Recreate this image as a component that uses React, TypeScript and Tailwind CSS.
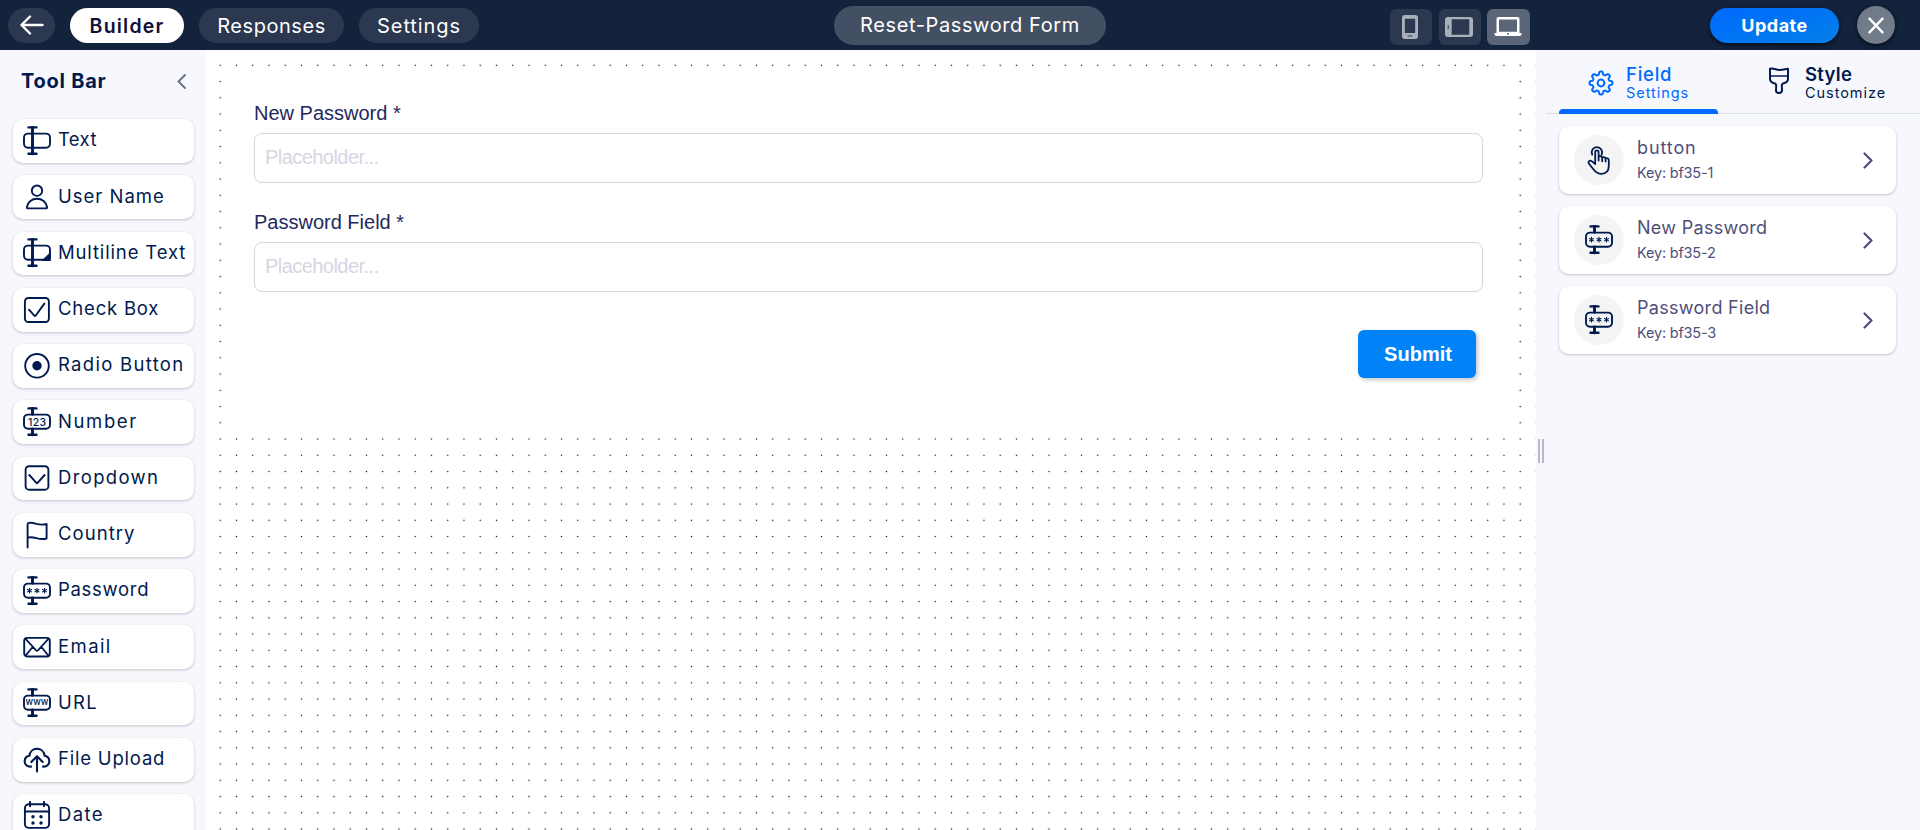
import React from "react";

const NAVY = "#001a4d";

function Beam({ children, solid }: { children?: React.ReactNode; solid?: boolean }) {
  return (
    <>
      <rect x="2" y="7.6" width="26" height="14.2" rx="4" />
      <path d="M6.5 1.4h8M6.5 27.7h8" strokeWidth="2.4" />
      {solid ? <path d="M10.5 1.2v26.7" strokeWidth="2.9" /> : <path d="M10.5 1.2v6M10.5 22v5.9" strokeWidth="2.9" />}
      {children}
    </>
  );
}

const icons: Record<string, React.ReactNode> = {
  Text: <Beam solid />,
  "User Name": (
    <>
      <circle cx="15" cy="8.7" r="5.2" />
      <path d="M6 26.4h18c.8 0 1.200-.5 1.100-1.200C24.300 20 20 16.800 15 16.800S5.700 20 4.900 25.200c-.1.7.3 1.200 1.100 1.200z" />
    </>
  ),
  "Multiline Text": (
    <Beam solid>
      <path d="M28.300 15v7.500H20.500z" fill={NAVY} strokeWidth="1" />
    </Beam>
  ),
  "Check Box": (
    <>
      <rect x="2.9" y="3" width="24" height="24" rx="3.5" />
      <path d="M7 14.700l5.300 6c.4.5.9.5 1.300 0L22.300 8.600" />
    </>
  ),
  "Radio Button": (
    <>
      <circle cx="15" cy="14.8" r="11.8" />
      <circle cx="15" cy="14.8" r="4.7" fill={NAVY} stroke="none" />
    </>
  ),
  Number: (
    <Beam>
      <text x="15.2" y="18.5" textAnchor="middle" fontSize="10.5" fontWeight="500" letterSpacing="0.4" stroke="none" fill={NAVY}>123</text>
    </Beam>
  ),
  Dropdown: (
    <>
      <rect x="3.6" y="3.2" width="22.8" height="23.5" rx="3.5" />
      <path d="M7.300 12l7.100 7.900c.4.4.8.4 1.200 0l7-7.900" />
    </>
  ),
  Country: <path d="M5.600 27.500V4.400c0-.8.4-1.300 1.200-1.500C12.500 1.500 15.500 6.500 24.600 4v14.500c-8.500 2.500-11.600-3-19-.8" />,
  Password: (
    <Beam>
      <path
        strokeWidth="1.1"
        d="M7.500 12.400v4.600M5.500 13.500l4 2.400M9.500 13.500l-4 2.400M15 12.400v4.600M13 13.500l4 2.400M17 13.500l-4 2.400M22.500 12.400v4.600M20.500 13.500l4 2.400M24.500 13.500l-4 2.400"
      />
    </Beam>
  ),
  Email: (
    <>
      <rect x="2.2" y="5.9" width="25.6" height="18.6" rx="3" />
      <path d="M3.600 6.900l10.500 11.500c.6.6 1.200.6 1.800 0L26.400 6.900M3.600 23.600l7.200-8.800M26.400 23.600l-7.200-8.800" strokeWidth="1.7" />
    </>
  ),
  URL: (
    <Beam>
      <text x="15" y="17.4" textAnchor="middle" fontSize="9.2" fontWeight="500" stroke="none" fill={NAVY}>www</text>
    </Beam>
  ),
  "File Upload": (
    <path d="M9 21.600C5 21.900 2.600 19.400 2.700 16.200c0-3 2.100-5 4.700-5.400C7.900 6.500 11 3.800 15 3.800s7.100 2.700 7.600 7c2.600.4 4.700 2.400 4.700 5.400 0 3.200-2.300 5.700-6.200 5.400M15 26.400V11.500M9.300 17l5.700-5.800 5.700 5.800" strokeWidth="2.1" />
  ),
  Date: (
    <>
      <rect x="2.9" y="3.2" width="24.2" height="23.7" rx="4" />
      <path d="M3 10.500h24M8 .8v4.400M22 .8v4.400" />
      <path d="M11 15.600v.1M19 15.600v.1M11 21.900v.1M19 21.900v.1" strokeWidth="3.4" />
    </>
  ),
  Button: (
    <path
      strokeWidth="1.8"
      d="M11.200 19V7a1.700 1.700 0 0 1 3.400 0v8.500M14.600 11.500c2-.8 3.600 0 3.600 1.800v3M18.200 12.300c1.800-.6 3.400.2 3.400 1.800v2.500M21.600 13.300c1.800-.4 3.200.4 3.200 2v5.500c0 5-2.500 8-7.500 8-3.500 0-5.500-1.500-7.300-3.800l-5-6.300c-1.500-2 .8-4 2.700-2.600L11.200 19M8.200 9.600a5.200 5.200 0 1 1 9.400 0"
    />
  ),
};

function FieldIcon({ name }: { name: string }) {
  return (
    <svg width="30" height="30" viewBox="0 0 30 30" fill="none" stroke={NAVY} strokeWidth="1.9" strokeLinecap="round" strokeLinejoin="round" className="shrink-0">
      {icons[name]}
    </svg>
  );
}

const gearPath =
  Array.from({ length: 161 }, (_, i) => {
    const a = (i / 160) * Math.PI * 2;
    const r = 10 + 1.5 * Math.tanh(2.2 * Math.cos(8 * a));
    return `${i ? "L" : "M"}${(13 + r * Math.sin(a)).toFixed(2)} ${(13 - r * Math.cos(a)).toFixed(2)}`;
  }).join("") + "Z";

const tools = [
  { name: "Text", tracking: "tracking-[0.35px]" },
  { name: "User Name", tracking: "tracking-[1px]" },
  { name: "Multiline Text", tracking: "tracking-[0.85px]" },
  { name: "Check Box", tracking: "tracking-[0.8px]" },
  { name: "Radio Button", tracking: "tracking-[1.3px]" },
  { name: "Number", tracking: "tracking-[1.6px]" },
  { name: "Dropdown", tracking: "tracking-[1.35px]" },
  { name: "Country", tracking: "tracking-[1.05px]" },
  { name: "Password", tracking: "tracking-[0.7px]" },
  { name: "Email", tracking: "tracking-[1.4px]" },
  { name: "URL", tracking: "tracking-[1.3px]" },
  { name: "File Upload", tracking: "tracking-[0.8px]" },
  { name: "Date", tracking: "tracking-[1.4px]" },
];

const fields = [
  { title: "button", key: "Key: bf35-1", icon: "Button", tracking: "tracking-[0.9px]" },
  { title: "New Password", key: "Key: bf35-2", icon: "Password", tracking: "tracking-[0.3px]" },
  { title: "Password Field", key: "Key: bf35-3", icon: "Password", tracking: "tracking-[0.3px]" },
];

export default function App() {
  return (
    <div className="flex h-[830px] w-full flex-col overflow-hidden bg-white font-['Inter',sans-serif]">
      <header className="flex h-[50px] shrink-0 items-start bg-[#13233c] text-[20px] text-white">
        <div className="flex w-[834px] items-start gap-[15px] pl-2 pt-2">
          <button className="flex h-[35px] w-[47px] items-center justify-center rounded-full bg-[#2b384f]">
            <svg width="24" height="20" viewBox="0 0 24 20" fill="none" stroke="white" strokeWidth="2.4" strokeLinecap="round" strokeLinejoin="round" className="-mt-px"><path d="M22.500 10H1.500M10 1.500L1.500 10l8.500 8.500" /></svg>
          </button>
          <button className="h-[35px] w-[114px] rounded-full bg-white text-[19.5px] font-semibold leading-[34px] tracking-[1.2px] text-[#10103a]">Builder</button>
          <button className="h-[35px] w-[145px] rounded-full bg-[#2b384f] leading-[34px] tracking-[0.55px]">Responses</button>
          <button className="h-[35px] w-[120px] rounded-full bg-[#2b384f] leading-[34px] tracking-[0.9px]">Settings</button>
        </div>
        <div className="mt-1.5 h-[39px] w-[272px] rounded-full bg-[#434f62] text-center leading-[39px] tracking-[0.6px]">Reset-Password Form</div>
        <div className="flex flex-1 items-start justify-end pr-[25px]">
          <div className="mr-[180px] mt-[9px] flex gap-[7px]">
            <button className="flex h-[36px] w-[42px] items-center justify-center rounded-[6px] bg-[#2b384f] pr-[2px]">
              <svg width="16" height="24" viewBox="0 0 17 26" fill="#aab0b9" fillRule="evenodd" preserveAspectRatio="none"><path d="M3 0h11a3 3 0 0 1 3 3v20a3 3 0 0 1-3 3H3a3 3 0 0 1-3-3V3a3 3 0 0 1 3-3zM3 4v15.500h11V4zM6 22.200v1.200h5v-1.200z" /></svg>
            </button>
            <button className="flex h-[36px] w-[42px] items-center justify-center rounded-[6px] bg-[#2b384f] pr-[2px]">
              <svg width="28" height="20" viewBox="0 0 28 20" fill="#aab0b9" fillRule="evenodd"><path d="M3 0h22a3 3 0 0 1 3 3v14a3 3 0 0 1-3 3H3a3 3 0 0 1-3-3V3a3 3 0 0 1 3-3zM6.700 2.300v15.400h17.600V2.300zM2.700 8v4.200h1V8z" /></svg>
            </button>
            <button className="-ml-px flex h-[36px] w-[43px] items-center justify-center rounded-[6px] bg-[#5a6577] pr-px">
              <svg width="28" height="20" viewBox="0 0 28 20" fill="white" fillRule="evenodd" className="-mt-px"><path d="M4.500 0h19a2 2 0 0 1 2 2v14h2v1a2 2 0 0 1-2 2H2.500a2 2 0 0 1-2-2v-1h2V2a2 2 0 0 1 2-2zM5 2.500v12.300h18V2.500zM13 16v1.500h2V16z" /></svg>
            </button>
          </div>
          <button className="mr-[18px] mt-2 h-[35px] w-[129px] rounded-full bg-linear-to-br from-[#0069ff] to-[#087fe8] text-[18px] font-bold leading-[33px] tracking-[0.5px] shadow-[0_2px_4px_#060d1a]">Update</button>
          <button className="mt-[6px] flex h-[38px] w-[38px] items-center justify-center rounded-full bg-[#727b89] shadow-[0_2px_4px_#060d1a]">
            <svg width="16" height="17" viewBox="0 0 16 17" stroke="white" strokeWidth="2.4" strokeLinecap="round"><path d="M1.500 1.700l13 13.600M14.500 1.700l-13 13.600" /></svg>
          </button>
        </div>
      </header>

      <div className="flex min-h-0 flex-1">
        <aside className="w-[206px] shrink-0 bg-[#f6f8fd] pl-[13px] text-[#001a4d]">
          <div className="flex h-[69px] items-start justify-between pl-2 pr-5 pt-[19px]">
            <h2 className="text-[20px] font-bold leading-[24px] tracking-[0.75px]">Tool Bar</h2>
            <svg width="9" height="15" viewBox="0 0 9 15" fill="none" stroke="#6b7686" strokeWidth="2" strokeLinecap="round" strokeLinejoin="round" className="mt-[5px]"><path d="M8 1L1.500 7.500 8 14" /></svg>
          </div>
          <ul className="flex flex-col gap-[12.5px]">
            {tools.map((t) => (
              <li key={t.name} className="flex h-[43.75px] w-[181px] shrink-0 items-center gap-[6px] rounded-[10px] bg-white pl-[9px] shadow-[0_1px_3px_rgba(0,0,0,0.22)]">
                <FieldIcon name={t.name} />
                <span className={`whitespace-nowrap pb-[1.5px] text-[18.5px] ${t.tracking}`}>{t.name}</span>
              </li>
            ))}
          </ul>
        </aside>

        <main className="h-full w-[1330px] shrink-0 bg-[radial-gradient(#111_0.75px,transparent_1px)] bg-[length:16.25px_16.25px] bg-[position:6.1px_7.2px] pl-[17px] pt-[17px] font-['Liberation_Sans',sans-serif]">
          <div className="h-[367px] w-[1294px] bg-white pl-[31px] pt-[34px] text-[20px] text-[#24285c]">
            <label className="block h-[32px] leading-[24px]">New Password *</label>
            <div className="h-[50px] w-[1229px] rounded-[8px] border border-[#cfd9e0] pl-[10px] leading-[47px] tracking-[-0.55px] text-[#d6d6e2]">Placeholder...</div>
            <label className="mt-[27px] block h-[32px] leading-[24px]">Password Field *</label>
            <div className="h-[50px] w-[1229px] rounded-[8px] border border-[#cfd9e0] pl-[10px] leading-[47px] tracking-[-0.55px] text-[#d6d6e2]">Placeholder...</div>
            <button className="ml-[1104px] mt-[38px] block h-[48px] w-[118px] rounded-[6px] bg-[#0083f6] pl-[2px] font-bold leading-[47px] text-white shadow-[2px_2px_4px_rgba(0,0,0,0.22)]">Submit</button>
          </div>
        </main>

        <aside className="flex flex-1 bg-[#f6f8fd]">
          <div className="flex w-[10px] shrink-0 items-start gap-[2px] pl-[2px] pt-[389px]">
            <i className="h-[24px] w-[2px] bg-[#b9b7c2]" />
            <i className="h-[24px] w-[2px] bg-[#b9b7c2]" />
          </div>
          <div className="flex-1">
            <div className="flex h-[64px] border-b border-[#dcdfe6] pl-[13px]">
              <div className="flex h-[64px] w-[159px] flex-col justify-between">
                <div className="flex items-start pl-[29px]">
                  <svg width="26" height="26" viewBox="0 0 26 26" fill="none" stroke="#0069ff" strokeWidth="2" strokeLinejoin="round" className="mt-[20px]">
                    <path d={gearPath} />
                    <circle cx="13" cy="13" r="3.4" />
                  </svg>
                  <div className="pl-[12px] pt-[13px] text-[#0069ff]">
                    <div className="text-[18.5px] font-medium leading-[22px] tracking-[0.75px]">Field</div>
                    <div className="text-[14.5px] leading-[15px] tracking-[0.95px]">Settings</div>
                  </div>
                </div>
                <div className="h-[5px] rounded-t-[4px] bg-[#0069ff]" />
              </div>
              <div className="flex items-start pl-[51px] text-[#001a4d]">
                <svg width="20" height="27" viewBox="0 0 20 27" fill="none" stroke={NAVY} strokeWidth="2" strokeLinecap="round" strokeLinejoin="round" className="mr-[16px] mt-[17px]">
                  <path d="M1 1.800c3-1.200 6 1 9 1.200 3 .2 6-.8 9-1.200v9.700c0 2.500-1.500 4-3.500 4.500-2 .4-2.700 1-2.700 2.500l.2 5c0 3.300-6 3.300-6 0l.2-5c0-1.500-.7-2.100-2.700-2.500C2.500 15.500 1 14 1 11.500z" />
                  <path d="M1.500 9h17" strokeWidth="1.3" />
                </svg>
                <div className="pt-[13px]">
                  <div className="text-[18.5px] font-semibold leading-[22px] tracking-[0.3px]">Style</div>
                  <div className="text-[14.5px] leading-[15px] tracking-[0.95px]">Customize</div>
                </div>
              </div>
            </div>
            <div className="flex flex-col gap-3 pl-[13px] pt-3">
              {fields.map((f) => (
                <div key={f.key} className="flex h-[68px] w-[337px] items-center rounded-[10px] bg-white pb-px pl-[15px] pr-[23px] text-[#4f4f7a] shadow-[0_1px_3px_rgba(0,0,0,0.22)]">
                  <div className="flex size-[50px] items-center justify-center rounded-full bg-[#f4f4f5]"><FieldIcon name={f.icon} /></div>
                  <div className="flex-1 pl-[13px] pt-[3px]">
                    <div className={`text-[18px] leading-[22px] ${f.tracking}`}>{f.title}</div>
                    <div className="text-[14.5px] leading-[27px] tracking-[-0.2px]">{f.key}</div>
                  </div>
                  <svg width="10" height="17" viewBox="0 0 10 17" fill="none" stroke="#4f4f7a" strokeWidth="2.2" strokeLinecap="round" strokeLinejoin="round" className="mt-[2px]"><path d="M1.500 1.500l7 7-7 7" /></svg>
                </div>
              ))}
            </div>
          </div>
        </aside>
      </div>
    </div>
  );
}
